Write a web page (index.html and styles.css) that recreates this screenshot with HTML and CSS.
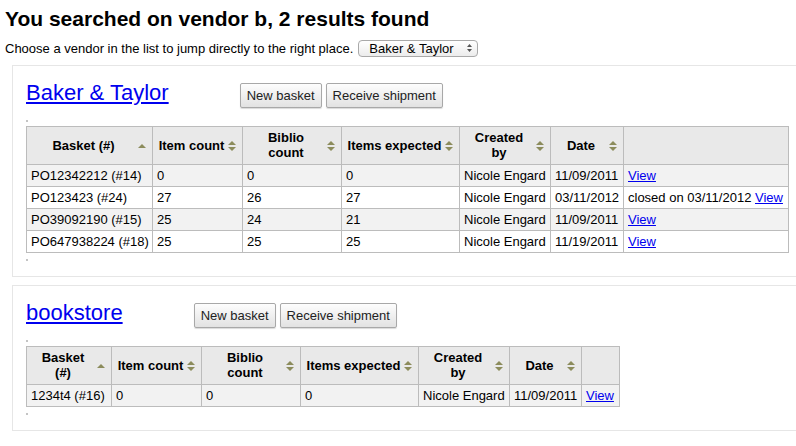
FILE: index.html
```html
<!DOCTYPE html>
<html lang="en">
<head>
  <meta charset="UTF-8">
  <title>Vendor search</title>
  <link rel="stylesheet" href="styles.css">
</head>
<body>
<h1>You searched on vendor b, 2 results found</h1>
<p class="jump">
  Choose a vendor in the list to jump directly to the right place.
  <span class="select-wrap">
    <select id="vendor-select">
      <option value="1">Baker &amp; Taylor</option>
      <option value="2">bookstore</option>
    </select>
    <svg class="select-arrows" width="5" height="8" viewBox="0 0 5 8"><path d="M2.5 0 L5 3 H0 Z M0 5 H5 L2.5 8 Z" fill="#555"/></svg>
  </span>
</p>

<div class="vendor-box">
  <div class="vendor-head">
    <h2><a href="#">Baker &amp; Taylor</a></h2>
    <div class="actions">
      <button>New basket</button>
      <button>Receive shipment</button>
    </div>
  </div>
  <div class="pager"></div>
  <table class="baskets baskets-a">
    <colgroup>
      <col class="w-basket"><col class="w-count"><col class="w-biblio"><col class="w-expected"><col class="w-created"><col class="w-date"><col>
    </colgroup>
    <thead>
      <tr>
        <th class="sort asc">Basket (#)</th>
        <th class="sort">Item count</th>
        <th class="sort">Biblio<br>count</th>
        <th class="sort">Items expected</th>
        <th class="sort">Created<br>by</th>
        <th class="sort">Date</th>
        <th></th>
      </tr>
    </thead>
    <tbody>
      <tr><td>PO12342212 (#14)</td><td>0</td><td>0</td><td>0</td><td>Nicole Engard</td><td>11/09/2011</td><td><a href="#">View</a></td></tr>
      <tr><td>PO123423 (#24)</td><td>27</td><td>26</td><td>27</td><td>Nicole Engard</td><td>03/11/2012</td><td>closed on 03/11/2012 <a href="#">View</a></td></tr>
      <tr><td>PO39092190 (#15)</td><td>25</td><td>24</td><td>21</td><td>Nicole Engard</td><td>11/09/2011</td><td><a href="#">View</a></td></tr>
      <tr><td>PO647938224 (#18)</td><td>25</td><td>25</td><td>25</td><td>Nicole Engard</td><td>11/19/2011</td><td><a href="#">View</a></td></tr>
    </tbody>
  </table>
  <div class="pager"></div>
</div>

<div class="vendor-box">
  <div class="vendor-head">
    <h2><a href="#">bookstore</a></h2>
    <div class="actions">
      <button>New basket</button>
      <button>Receive shipment</button>
    </div>
  </div>
  <div class="pager"></div>
  <table class="baskets baskets-b">
    <colgroup>
      <col class="w-basket"><col class="w-count"><col class="w-biblio"><col class="w-expected"><col class="w-created"><col class="w-date"><col>
    </colgroup>
    <thead>
      <tr>
        <th class="sort asc">Basket<br>(#)</th>
        <th class="sort">Item count</th>
        <th class="sort">Biblio<br>count</th>
        <th class="sort">Items expected</th>
        <th class="sort">Created<br>by</th>
        <th class="sort">Date</th>
        <th></th>
      </tr>
    </thead>
    <tbody>
      <tr><td>1234t4 (#16)</td><td>0</td><td>0</td><td>0</td><td>Nicole Engard</td><td>11/09/2011</td><td><a href="#">View</a></td></tr>
    </tbody>
  </table>
  <div class="pager"></div>
</div>
</body>
</html>
```

FILE: styles.css
```css
html {
  overflow: hidden;
}
body {
  font-family: 'Liberation Sans', Arial, sans-serif;
  font-size: 13px;
  color: #000;
  background: #fff;
  margin: 0;
  padding: 0 0 0 5px;
}
a {
  color: #0000ee;
}
h1 {
  font-size: 21px;
  line-height: 24px;
  margin: 7px 0 0;
}
.jump {
  display: flex;
  align-items: center;
  height: 18px;
  margin: 8px 0 0;
  white-space: nowrap;
}
.select-wrap {
  position: relative;
  margin-left: 5px;
}
#vendor-select {
  appearance: none;
  -webkit-appearance: none;
  font-family: inherit;
  font-size: 13px;
  width: 120px;
  height: 17px;
  padding: 0 0 0 10px;
  border: 1px solid #a9a9a9;
  border-radius: 4px;
  background: linear-gradient(#ffffff, #ececec);
  color: #000;
  display: block;
}
.select-arrows {
  position: absolute;
  right: 6px;
  top: 4px;
  pointer-events: none;
}
.vendor-box {
  margin: 8px 0 0 7px;
  border: 1px solid #e6e6e6;
  border-right: none;
  padding: 14px 0 15px 13px;
}
.vendor-head {
  display: flex;
  align-items: baseline;
  gap: 71px;
}
h2 {
  font-size: 22px;
  font-weight: normal;
  line-height: 25px;
  margin: 0;
}
.actions {
  display: flex;
  gap: 4px;
}
button {
  font-family: inherit;
  font-size: 13px;
  line-height: 15px;
  color: #222;
  padding: 4px 6px;
  border: 1px solid #a8a8a8;
  border-radius: 2px;
  background: linear-gradient(#fdfdfd, #e2e2e2);
  box-shadow: 0 1px 1px rgba(0, 0, 0, 0.15);
}
.pager {
  width: 2px;
  height: 2px;
  background: #c4c4c4;
  margin: 12px 0 4px;
}
.baskets + .pager {
  margin: 6px 0 0;
}
.baskets {
  border-collapse: collapse;
  table-layout: fixed;
}
.baskets-a {
  width: 763px;
}
.baskets-b {
  width: 594px;
}
.w-basket { width: 126px; }
.w-count { width: 90px; }
.w-biblio { width: 99px; }
.w-expected { width: 118px; }
.w-created { width: 91px; }
.w-date { width: 73px; }
.baskets-b .w-basket { width: 85px; }
.baskets-b .w-date { width: 72px; }

.baskets th,
.baskets td {
  border: 1px solid #bcbcbc;
  line-height: 15px;
  white-space: nowrap;
}
.baskets th {
  background: #e9e9e9;
  font-weight: bold;
  text-align: center;
  height: 30px;
  padding: 3px 16px 4px 4px;
  position: relative;
}
.baskets td {
  padding: 3px 4px;
  text-align: left;
}
.baskets tbody tr:nth-child(odd) td {
  background: #f2f2f2;
}
.sort::before,
.sort::after {
  content: "";
  position: absolute;
  right: 6px;
  width: 0;
  height: 0;
  border-left: 4px solid transparent;
  border-right: 4px solid transparent;
}
.sort::before {
  top: calc(50% - 5px);
  border-bottom: 4px solid #8c8c5c;
}
.sort::after {
  top: calc(50% + 1px);
  border-top: 4px solid #8c8c5c;
}
.sort.asc::before {
  top: calc(50% - 2px);
}
.sort.asc::after {
  display: none;
}
```
